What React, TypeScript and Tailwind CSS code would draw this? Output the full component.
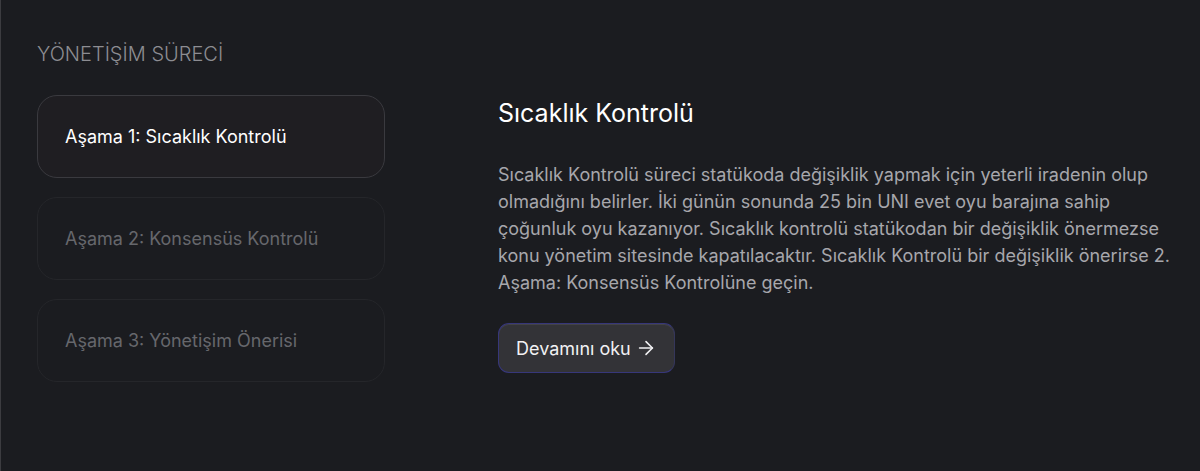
import { ArrowRight } from 'lucide-react'

const steps = [
    { label: 'Aşama 1: Sıcaklık Kontrolü', active: true },
    { label: 'Aşama 2: Konsensüs Kontrolü', active: false },
    { label: 'Aşama 3: Yönetişim Önerisi', active: false },
]

export default function App() {
    return (
        <section
            className="min-h-[471px] w-full bg-[#1b1c20] border-l border-[#3c3c40] pl-[36px] pr-[22px] pt-[40px]"
            style={{ fontFamily: 'Inter, "Noto Sans", sans-serif' }}
        >
            <h2 className="text-[20px] font-light leading-[28px] text-[#8d8d92]">YÖNETİŞİM SÜRECİ</h2>
            <div className="mt-[27px] grid grid-cols-[348px_1fr] gap-x-[113px]">
                <div className="flex flex-col gap-[19px]">
                    {steps.map((s) => (
                        <div
                            key={s.label}
                            className={
                                s.active
                                    ? 'flex h-[83px] items-center rounded-[20px] border border-[#3a3a3f] bg-[#1f1e22] px-[27px] text-[18px] text-white'
                                    : 'flex h-[83px] items-center rounded-[20px] border border-[#25262a] bg-[#1b1c20] px-[27px] text-[18px] text-[#66676c]'
                            }
                        >
                            {s.label}
                        </div>
                    ))}
                </div>
                <div className="pt-[2px]">
                    <h3 className="text-[25px] leading-[32px] font-normal text-white">Sıcaklık Kontrolü</h3>
                    <p className="mt-[32px] text-[18px] leading-[27px] text-[#a7a7ac]">
                        Sıcaklık Kontrolü süreci statükoda değişiklik yapmak için yeterli iradenin olup olmadığını belirler. İki günün sonunda 25 bin UNI evet oyu barajına sahip çoğunluk oyu kazanıyor. Sıcaklık kontrolü statükodan bir değişiklik önermezse konu yönetim sitesinde kapatılacaktır. Sıcaklık Kontrolü bir değişiklik önerirse 2. Aşama: Konsensüs Kontrolüne geçin.
                    </p>
                    <button className="mt-[27px] flex h-[50px] items-center gap-[4px] rounded-[11px] border-[1.5px] border-[#37377a] border-r-[#35365a] bg-[#333337] pl-[17px] pr-[17px] text-[18px] text-[#f1f1f3] shadow-[inset_0_1px_0_rgba(255,255,255,0.08)]">
                        Devamını oku
                        <ArrowRight size={22} strokeWidth={1.7} />
                    </button>
                </div>
            </div>
        </section>
    )
}
